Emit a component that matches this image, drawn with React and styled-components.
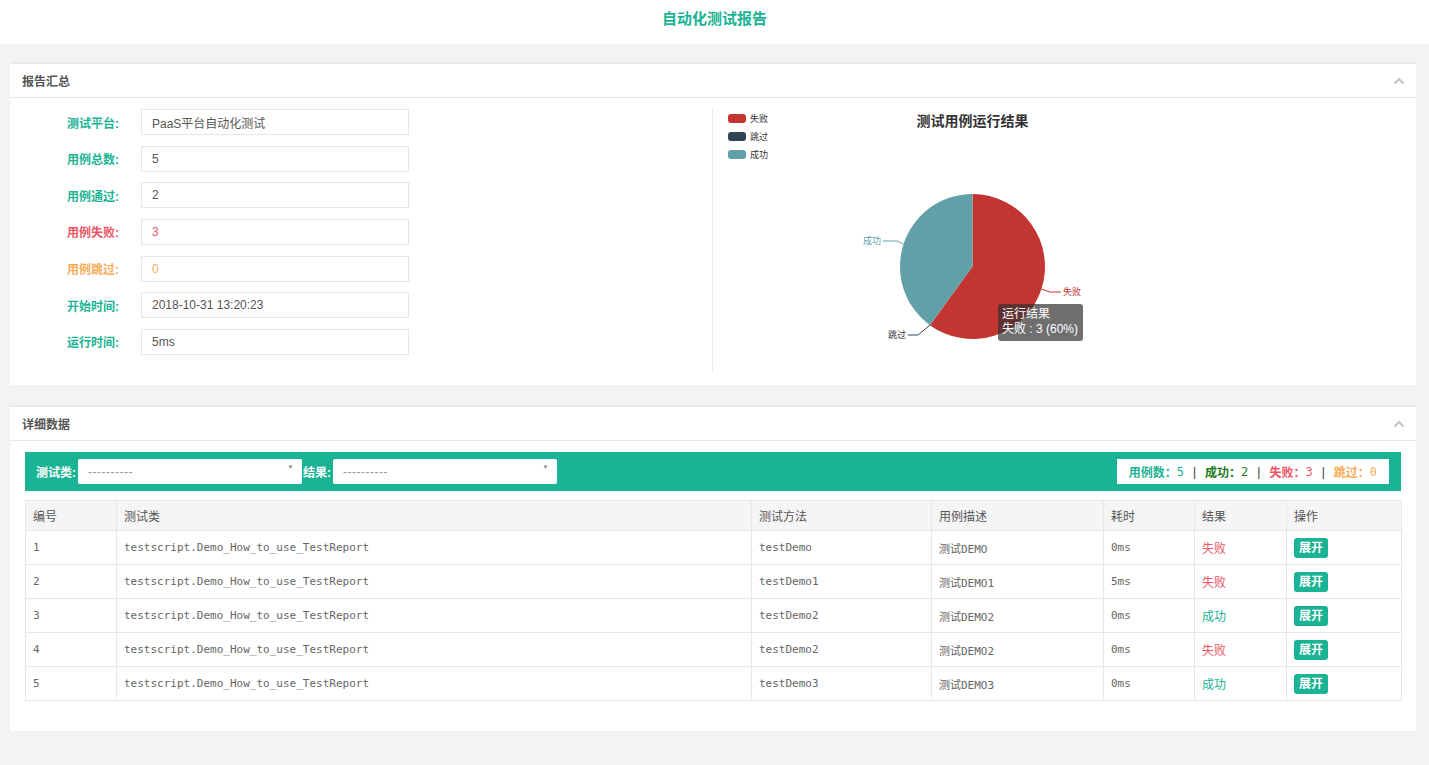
import React from 'react'
import styled, { createGlobalStyle } from 'styled-components'

const GREEN = '#1ab394'
const RED = '#ed5565'
const ORANGE = '#f8ac59'
const SANS = `"Liberation Sans", "Noto Sans CJK SC", sans-serif`
const MONO = `"DejaVu Sans Mono", "Noto Sans CJK SC", monospace`

const GlobalStyle = createGlobalStyle`
  body {
    margin: 0;
    background: #f3f3f4;
    font-family: ${SANS};
    font-size: 12px;
    color: #555;
  }
  * { box-sizing: border-box; }
`

const summary = [
  { label: '测试平台:', value: 'PaaS平台自动化测试' },
  { label: '用例总数:', value: '5' },
  { label: '用例通过:', value: '2' },
  { label: '用例失败:', value: '3', tone: RED },
  { label: '用例跳过:', value: '0', tone: ORANGE },
  { label: '开始时间:', value: '2018-10-31 13:20:23' },
  { label: '运行时间:', value: '5ms' },
]

const rows = [
  { id: 1, method: 'testDemo', desc: '测试DEMO', time: '0ms', ok: false },
  { id: 2, method: 'testDemo1', desc: '测试DEMO1', time: '5ms', ok: false },
  { id: 3, method: 'testDemo2', desc: '测试DEMO2', time: '0ms', ok: true },
  { id: 4, method: 'testDemo2', desc: '测试DEMO2', time: '0ms', ok: false },
  { id: 5, method: 'testDemo3', desc: '测试DEMO3', time: '0ms', ok: true },
]

const columns = [
  { name: '编号', width: 91 },
  { name: '测试类', width: 635 },
  { name: '测试方法', width: 180 },
  { name: '用例描述', width: 172 },
  { name: '耗时', width: 91 },
  { name: '结果', width: 92 },
  { name: '操作', width: 115 },
]

function Chevron() {
  return (
    <svg width="12" height="8" viewBox="0 0 12 8">
      <path d="M1.5 6.5 L6 2 L10.5 6.5" fill="none" stroke="#c4c4c4" strokeWidth="2" />
    </svg>
  )
}

function PieChart() {
  const legend = [
    { name: '失败', color: '#c23531' },
    { name: '跳过', color: '#2f4554' },
    { name: '成功', color: '#61a0a8' },
  ]
  return (
    <svg width="520" height="263" viewBox="0 0 520 263">
      {legend.map((l, i) => (
        <g key={l.name}>
          <rect x="15" y={6 + i * 18} width="18" height="9" rx="3" fill={l.color} />
          <text x="37" y={11 + i * 18} fontSize="9" fill="#333" dominantBaseline="central"
                fontFamily={SANS}>{l.name}</text>
        </g>
      ))}
      <text x="259.5" y="13" textAnchor="middle" dominantBaseline="central" fontSize="14"
            fontWeight="bold" fill="#333" fontFamily={SANS}>测试用例运行结果</text>

      <path d="M259.5 158.5 L259.5 86 A72.5 72.5 0 1 1 216.89 217.15 Z" fill="#c23531" />
      <path d="M259.5 158.5 L216.89 217.15 A72.5 72.5 0 0 1 259.5 86 Z" fill="#61a0a8" />

      <polyline points="190.5,136 184,133 170,133" fill="none" stroke="#61a0a8" />
      <text x="168" y="133" textAnchor="end" dominantBaseline="central" fontSize="9"
            fill="#61a0a8" fontFamily={SANS}>成功</text>

      <polyline points="328.5,181 337,184 348,184" fill="none" stroke="#c23531" />
      <text x="350" y="184" dominantBaseline="central" fontSize="9"
            fill="#c23531" fontFamily={SANS}>失败</text>

      <polyline points="217,217 205,227 195,227" fill="none" stroke="#2f4554" />
      <text x="193" y="227" textAnchor="end" dominantBaseline="central" fontSize="9"
            fill="#333" fontFamily={SANS}>跳过</text>
    </svg>
  )
}

export default function App() {
  return (
    <>
      <GlobalStyle />
      <Header>
        <PageTitle>自动化测试报告</PageTitle>
      </Header>
      <Content>
        <Panel>
          <PanelHead>
            <PanelTitle>报告汇总</PanelTitle>
            <Chevron />
          </PanelHead>
          <SummaryBody>
            <Form>
              {summary.map((s) => (
                <React.Fragment key={s.label}>
                  <FieldLabel tone={s.tone}>{s.label}</FieldLabel>
                  <FieldValue tone={s.tone}>{s.value}</FieldValue>
                </React.Fragment>
              ))}
            </Form>
            <ChartCol>
              <PieChart />
              <Tooltip>
                运行结果<br />
                失败 : 3 (60%)
              </Tooltip>
            </ChartCol>
          </SummaryBody>
        </Panel>

        <Panel>
          <PanelHead>
            <PanelTitle>详细数据</PanelTitle>
            <Chevron />
          </PanelHead>
          <DetailBody>
            <FilterBar>
              <FilterLabel>测试类:</FilterLabel>
              <Select>----------<Caret>▼</Caret></Select>
              <FilterLabel>结果:</FilterLabel>
              <Select>----------<Caret>▼</Caret></Select>
              <Counts>
                <CountLabel tone={GREEN}>用例数：</CountLabel><CountNum tone={GREEN}>5</CountNum>
                <Sep>|</Sep>
                <CountLabel tone="#1d7a1d">成功：</CountLabel><CountNum tone="#1d7a1d">2</CountNum>
                <Sep>|</Sep>
                <CountLabel tone={RED}>失败：</CountLabel><CountNum tone={RED}>3</CountNum>
                <Sep>|</Sep>
                <CountLabel tone={ORANGE}>跳过：</CountLabel><CountNum tone={ORANGE}>0</CountNum>
              </Counts>
            </FilterBar>

            <Table>
              <colgroup>
                {columns.map((c) => <col key={c.name} style={{ width: c.width }} />)}
              </colgroup>
              <thead>
                <tr>
                  {columns.map((c) => <Th key={c.name}>{c.name}</Th>)}
                </tr>
              </thead>
              <tbody>
                {rows.map((r) => (
                  <tr key={r.id}>
                    <Td>{r.id}</Td>
                    <Td>testscript.Demo_How_to_use_TestReport</Td>
                    <Td>{r.method}</Td>
                    <Td>{r.desc}</Td>
                    <Td>{r.time}</Td>
                    <ResultTd ok={r.ok}>{r.ok ? '成功' : '失败'}</ResultTd>
                    <Td><ExpandButton>展开</ExpandButton></Td>
                  </tr>
                ))}
              </tbody>
            </Table>
          </DetailBody>
        </Panel>
      </Content>
    </>
  )
}

const Header = styled.header`
  height: 44px;
  background: #fff;
  display: flex;
  justify-content: center;
  padding-top: 10px;
`
const PageTitle = styled.h1`
  margin: 0;
  font-size: 15px;
  line-height: 18px;
  font-weight: bold;
  color: ${GREEN};
`
const Content = styled.main`
  padding: 18px 13px 34px 10px;
  display: flex;
  flex-direction: column;
  gap: 20px;
`
const Panel = styled.section`
  background: #fff;
  border-top: 2px solid #e7eaec;
`
const PanelHead = styled.div`
  height: 34px;
  display: flex;
  align-items: center;
  justify-content: space-between;
  padding: 0 11px 0 12px;
  border-bottom: 1px solid #e7eaec;
`
const PanelTitle = styled.h5`
  margin: 0;
  font-size: 12px;
  font-weight: 600;
  color: #555;
`
const SummaryBody = styled.div`
  display: grid;
  grid-template-columns: 702px 1fr;
  padding: 10px 0 14px;
`
const Form = styled.div`
  display: grid;
  grid-template-columns: 109px 268px;
  grid-auto-rows: 26px;
  column-gap: 22px;
  row-gap: 10.67px;
  padding-top: 1px;
  align-items: center;
`
const FieldLabel = styled.label`
  text-align: right;
  font-weight: bold;
  color: ${(p) => p.tone || GREEN};
`
const FieldValue = styled.div`
  height: 26px;
  border: 1px solid #e5e6e7;
  padding: 0 10px;
  display: flex;
  align-items: center;
  color: ${(p) => p.tone || '#555'};
  font-size: 12px;
`
const ChartCol = styled.div`
  position: relative;
  border-left: 1px solid #e7eaec;
  height: 263px;
`
const Tooltip = styled.div`
  position: absolute;
  left: 285px;
  top: 196px;
  width: 85px;
  height: 37px;
  padding: 3px 4px;
  background: rgba(50, 50, 50, 0.7);
  border-radius: 3px;
  color: #fff;
  font-size: 12px;
  line-height: 15px;
  white-space: nowrap;
`
const DetailBody = styled.div`
  padding: 11px 15px 30px;
`
const FilterBar = styled.div`
  height: 39px;
  background: ${GREEN};
  display: flex;
  align-items: center;
  padding: 0 12px 0 11px;
`
const FilterLabel = styled.span`
  color: #fff;
  font-weight: bold;
  font-size: 12px;
  padding-right: 2px;
`
const Select = styled.div`
  position: relative;
  width: 224px;
  height: 25px;
  margin-right: 1px;
  background: #fff;
  border-radius: 2px;
  display: flex;
  align-items: center;
  padding: 0 10px;
  color: #999;
  font-size: 12px;
  letter-spacing: 0.5px;
`
const Caret = styled.span`
  position: absolute;
  right: 8px;
  top: 5px;
  font-size: 6px;
  color: #888;
`
const Counts = styled.div`
  margin-left: auto;
  height: 25px;
  background: #fff;
  display: flex;
  align-items: center;
  padding: 0 12px;
  font-size: 12px;
`
const CountLabel = styled.span`
  font-weight: bold;
  color: ${(p) => p.tone};
`
const CountNum = styled.span`
  font-family: ${MONO};
  font-size: 12px;
  color: ${(p) => p.tone};
`
const Sep = styled.span`
  margin: 0 9px;
  color: #333;
`
const Table = styled.table`
  margin-top: 9px;
  width: 100%;
  table-layout: fixed;
  border-collapse: collapse;
  border: 1px solid #e7e7e7;
`
const Th = styled.th`
  height: 30px;
  background: #f5f5f6;
  border: 1px solid #e7e7e7;
  text-align: left;
  padding: 0 7px;
  font-weight: normal;
  font-size: 12px;
  color: #555;
`
const Td = styled.td`
  height: 34px;
  border: 1px solid #e7e7e7;
  padding: 0 7px;
  font-family: ${MONO};
  font-size: 11px;
  color: #666;
`
const ResultTd = styled(Td)`
  font-family: ${SANS};
  font-size: 12px;
  color: ${(p) => (p.ok ? GREEN : RED)};
`
const ExpandButton = styled.span`
  display: inline-block;
  background: ${GREEN};
  color: #fff;
  font-family: ${SANS};
  font-weight: bold;
  font-size: 12px;
  line-height: 16px;
  padding: 2px 5px;
  border-radius: 3px;
`
